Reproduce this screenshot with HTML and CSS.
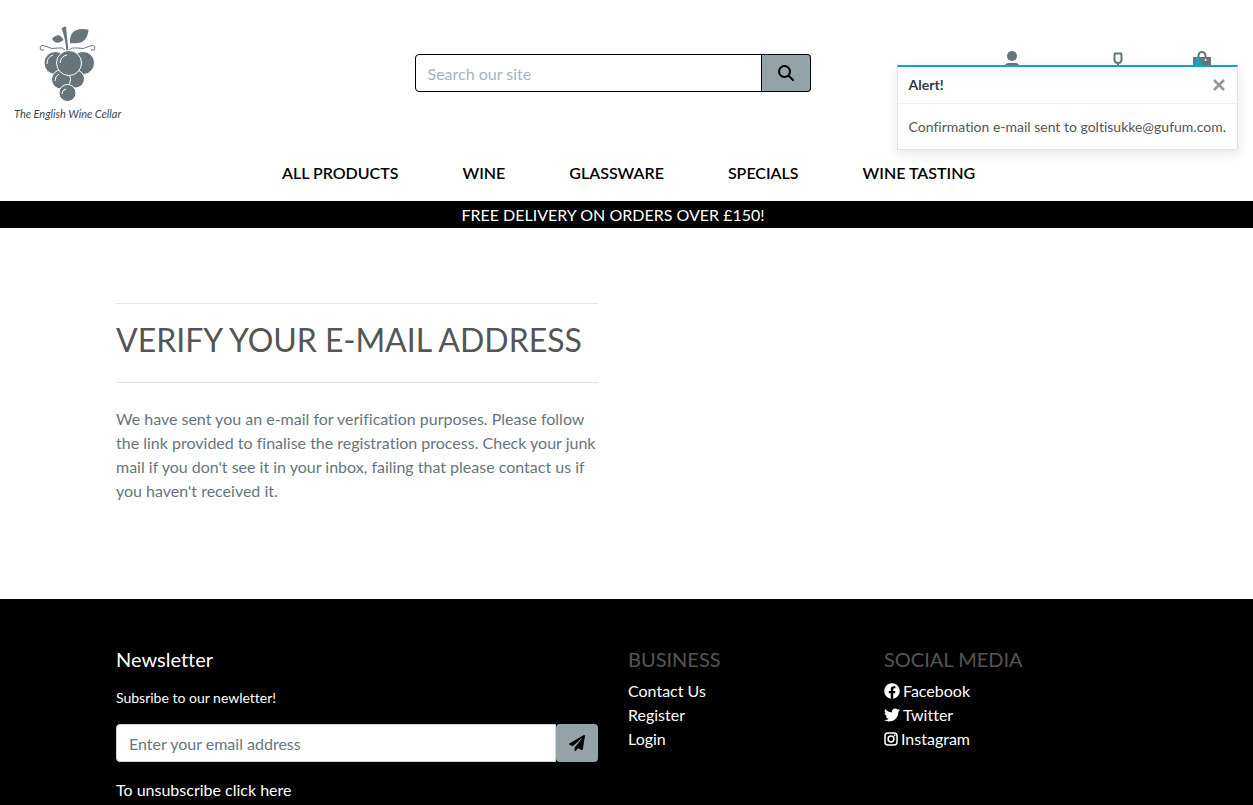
FILE: index.html
```html
<!DOCTYPE html>
<html lang="en">
<head>
<meta charset="utf-8">
<meta name="viewport" content="width=device-width, initial-scale=1">
<title>The English Wine Cellar</title>
<link rel="stylesheet" href="styles.css">
</head>
<body>
<header>
  <div class="topbar">
    <a class="brand" href="#" aria-label="The English Wine Cellar home">
      <svg class="brand-mark" viewBox="0 0 64 84" aria-hidden="true">
        <path d="M25.500 6.500q4-3 4.500-1.500l2.500 25h-2q-1-14-5-23.500z"/>
        <path d="M34 21q-1-17 18.500-13.500q-1 16-18.500 13.500z"/>
        <path d="M16 17q7-8 11.500 1q-7 6-11.500-1z"/>
        <path class="vine" d="M8 28q-4 1-4-2q1-4 5-2q7 4 13 2q5-1 7 2M55 28q4 1 4-2q-1-4-5-2q-7 4-13 2q-5-1-8 2"/>
        <g class="grape">
          <circle cx="19.500" cy="41" r="11.500"/><circle cx="47" cy="41" r="11.500"/>
          <circle cx="39.500" cy="57" r="9"/><circle cx="25" cy="57.500" r="9.500"/>
          <circle cx="31.500" cy="71" r="8.500"/><circle cx="33" cy="41" r="12.500"/>
        </g>
        <path class="shine" d="M11 42q0-7 6-9M24 41q1-7 7-8M19 59q0-5 4-7M26 72q0-4 4-5"/>
      </svg>
      <span class="brand-name">The English Wine Cellar</span>
    </a>
    <form class="group search">
      <input class="field" type="text" placeholder="Search our site" aria-label="Search our site">
      <button class="btn" type="button" aria-label="Search">
        <svg width="16" height="16" viewBox="0 0 16 16" aria-hidden="true"><path class="lens" d="M6.500 1a5.500 5.500 0 1 0 0 11a5.500 5.500 0 1 0 0-11zM10.500 10.500L15 15"/></svg>
      </button>
    </form>
    <div class="tools">
      <a href="#" aria-label="My account"><svg width="14" height="18" viewBox="0 0 14 18" aria-hidden="true"><circle cx="7" cy="5" r="5"/><path d="M0 18v-3q0-3 4-3h6q4 0 4 3v3z"/></svg></a>
      <a href="#" aria-label="Wine tasting"><svg width="10" height="18" viewBox="0 0 10 18" aria-hidden="true"><path class="glass" d="M1.700 2.500h6.600l.3 5q0 4.500-3.600 4.500q-3.600 0-3.600-4.500zM5 12v6"/></svg></a>
      <a class="bag" href="#" aria-label="Shopping bag"><svg width="18" height="18" viewBox="0 0 18 18" aria-hidden="true"><path d="M0 6h4.500V4.500a4.500 4.500 0 0 1 9 0V6H18v12H0zM6.500 6h5V4.500a2.500 2.500 0 0 0-5 0z"/><circle cx="12.500" cy="9" r="1" fill="#fff"/></svg></a>
    </div>
  </div>
  <nav class="menu">
    <a href="#">ALL PRODUCTS</a>
    <a href="#">WINE</a>
    <a href="#">GLASSWARE</a>
    <a href="#">SPECIALS</a>
    <a href="#">WINE TASTING</a>
  </nav>
  <p class="banner">FREE DELIVERY ON ORDERS OVER £150!</p>
</header>

<aside class="toast" role="status">
  <div class="toast-head"><strong>Alert!</strong><button class="close" type="button" aria-label="Close"><svg width="12" height="12" viewBox="0 0 12 12" aria-hidden="true"><path d="M1 1l10 10M11 1L1 11"/></svg></button></div>
  <p class="toast-body">Confirmation e-mail sent to goltisukke@gufum.com.</p>
</aside>

<main class="columns">
  <section class="verify">
    <h1>VERIFY YOUR E-MAIL ADDRESS</h1>
    <p>We have sent you an e-mail for verification purposes. Please follow the link provided to finalise the registration process. Check your junk mail if you don't see it in your inbox, failing that please contact us if you haven't received it.</p>
  </section>
</main>

<footer>
  <div class="columns">
    <section class="newsletter">
      <h2>Newsletter</h2>
      <label for="email">Subsribe to our newletter!</label>
      <form class="group">
        <input class="field" id="email" type="email" placeholder="Enter your email address">
        <button class="btn" type="button" aria-label="Subscribe">
          <svg width="16" height="16" viewBox="0 0 512 512" aria-hidden="true"><path d="M476 3.200L12.500 270.600c-18.100 10.400-15.800 35.600 2.200 43.200L121 358.400l287.300-253.200c5.500-4.900 13.300 2.600 8.600 8.300L176 407v80.500c0 23.600 28.500 32.900 42.500 15.800L282 426l124.600 52.200c14.200 6 30.400-2.900 33-18.200l72-432C515 7.800 493.300-6.800 476 3.200z"/></svg>
        </button>
      </form>
      <a href="#">To unsubscribe click here</a>
    </section>
    <section class="links">
      <h2>BUSINESS</h2>
      <ul>
        <li><a href="#">Contact Us</a></li>
        <li><a href="#">Register</a></li>
        <li><a href="#">Login</a></li>
      </ul>
    </section>
    <section class="links">
      <h2>SOCIAL MEDIA</h2>
      <ul>
        <li><a href="#"><svg width="16" height="16" viewBox="0 0 512 512" aria-hidden="true"><path d="M504 256C504 119 393 8 256 8S8 119 8 256c0 123.800 90.700 226.400 209.200 245V327.700h-63V256h63v-54.600c0-62.200 37-96.500 93.700-96.500 27.100 0 55.500 4.800 55.500 4.800v61h-31.300c-30.800 0-40.400 19.100-40.400 38.700V256h68.800l-11 71.700h-57.800V501C413.300 482.400 504 379.800 504 256z"/></svg>Facebook</a></li>
        <li><a href="#"><svg width="16" height="16" viewBox="0 0 512 512" aria-hidden="true"><path d="M459.400 151.700c.3 4.500.3 9.100.3 13.600 0 138.700-105.600 298.600-298.600 298.600-59.500 0-114.700-17.200-161.100-47.100 8.400 1 16.600 1.300 25.300 1.300 49.100 0 94.200-16.600 130.300-44.800-46.100-1-84.800-31.200-98.100-72.800 6.500 1 13 1.600 19.800 1.600 9.400 0 18.800-1.300 27.600-3.600-48.100-9.700-84.100-52-84.100-103v-1.300c14 7.800 30.200 12.700 47.400 13.300-28.300-18.800-46.800-51-46.800-87.400 0-19.500 5.200-37.400 14.300-53 51.700 63.700 129.300 105.300 216.400 109.800-1.600-7.800-2.600-15.900-2.600-24 0-57.800 46.800-104.900 104.900-104.900 30.200 0 57.500 12.700 76.700 33.100 23.700-4.500 46.500-13.300 66.600-25.300-7.800 24.400-24.400 44.800-46.100 57.800 21.100-2.300 41.600-8.100 60.400-16.200-14.300 20.800-32.200 39.300-52.600 54.300z"/></svg>Twitter</a></li>
        <li><a href="#"><svg width="14" height="16" viewBox="0 0 14 16" aria-hidden="true"><g fill="none" stroke="#fff"><rect x="1" y="2" width="12" height="12" rx="3" stroke-width="1.500"/><circle cx="7" cy="8" r="2.900" stroke-width="1.500"/></g><circle cx="10.700" cy="4.400" r=".9"/></svg>Instagram</a></li>
      </ul>
    </section>
  </div>
</footer>
</body>
</html>
```
FILE: styles.css
```css
* { box-sizing: border-box; }
body {
  margin: 0;
  min-height: 100vh;
  display: flex;
  flex-direction: column;
  background: #fff;
  color: #67757c;
  font: 16px/24px Lato, "Open Sans", sans-serif;
  font-variant-ligatures: none;
}
h1, h2, p, ul { margin: 0; padding: 0; font-weight: 400; }
ul { list-style: none; }
a { color: inherit; text-decoration: none; }

.topbar {
  display: grid;
  grid-template-columns: 1fr 396px 1fr;
  align-items: center;
  padding: 24px 42px 0 14px;
}
.brand {
  display: flex;
  flex-direction: column;
  align-items: center;
  justify-self: start;
}
.brand-mark { width: 64px; height: 84px; margin-top: -2px; fill: #67757a; }
.vine { fill: none; stroke: #67757a; stroke-width: 1; }
.grape { stroke: #fff; stroke-width: 1; }
.shine { fill: none; stroke: #fff; stroke-width: 1; }
.brand-name { color: #37474f; font-size: 11px; line-height: 16px; font-style: italic; }

.group { display: flex; margin: 0; }
.field {
  flex: 1;
  min-width: 0;
  height: 38px;
  padding: 6px 12px;
  border: 1px solid #ced4da;
  border-radius: 4px 0 0 4px;
  background: #fff;
  color: #495057;
  font: inherit;
}
.field::placeholder { color: #6c757d; opacity: 1; }
.btn {
  width: 42px;
  height: 38px;
  padding: 0;
  border: 0;
  border-radius: 4px;
  background: #95a2a8;
}
.btn svg { display: block; margin: auto; }
.lens { fill: none; stroke: #000; stroke-width: 2; stroke-linecap: round; }
.search .field { border-color: #000; }
.search .field::placeholder { color: #a5b5be; }
.search .btn { width: 49px; border: 1px solid #000; border-left: 0; border-radius: 0 4px 4px 0; }

.tools {
  display: grid;
  grid-template-columns: 112px 100px 43px;
  justify-content: end;
  justify-items: center;
  align-self: start;
  padding-top: 27px;
  fill: #67757a;
}
.tools svg { display: block; }
.tools .bag { justify-self: end; }
.glass { fill: none; stroke: #67757a; stroke-width: 2; }

.menu {
  display: flex;
  justify-content: center;
  gap: 64px;
  padding: 39px 0 16px 4px;
  color: #000;
  font-weight: 600;
}
.banner {
  padding: 2px 27px 1px 0;
  background: #000;
  color: #fff;
  text-align: center;
}

.toast {
  position: absolute;
  top: 65px;
  right: 15px;
  min-width: 341px;
  border: 1px solid #e4e4e4;
  border-top: 2px solid #17a2b8;
  background: #fff;
  box-shadow: 0 4px 12px rgba(0, 0, 0, .1);
  font-size: 14px;
  white-space: nowrap;
}
.toast::before {
  content: "";
  position: absolute;
  right: 33px;
  bottom: 100%;
  border: 6px solid transparent;
  border-top: 0;
  border-bottom: 11px solid #17a2b8;
}
.toast-head {
  display: flex;
  align-items: center;
  justify-content: space-between;
  padding: 6px 12px 6px 11px;
  border-bottom: 1px solid #f0f0f0;
  color: #343a40;
}
.close { padding: 0; border: 0; background: none; }
.close svg { display: block; stroke: #999; stroke-width: 2.500; }
.toast-body { padding: 11px 11px 10px; color: #555; }

.columns {
  display: grid;
  grid-template-columns: repeat(4, 1fr);
  column-gap: 30px;
  padding: 0 143px 0 116px;
}
.verify, .newsletter { grid-column: span 2; }
.verify { padding: 75px 0 96px; }
.verify h1 {
  padding: 16px 0 23px;
  margin-bottom: 24px;
  border: 1px solid #e5e5e5;
  border-width: 1px 0;
  color: #555;
  font-size: 32px;
  line-height: 39px;
}

footer { flex: 1; background: #000; color: #fff; }
footer .columns { padding-top: 48px; }
h2 { font-size: 20px; line-height: 24px; }
.links h2 { margin-bottom: 8px; color: #555; }
.links a { display: flex; align-items: center; gap: 3px; }
.links svg { fill: #fff; }
.newsletter { display: flex; flex-direction: column; align-items: stretch; }
.newsletter label { margin: 15px 0 14px; font-size: 14px; }
.newsletter .group { margin-bottom: 16px; }
```
